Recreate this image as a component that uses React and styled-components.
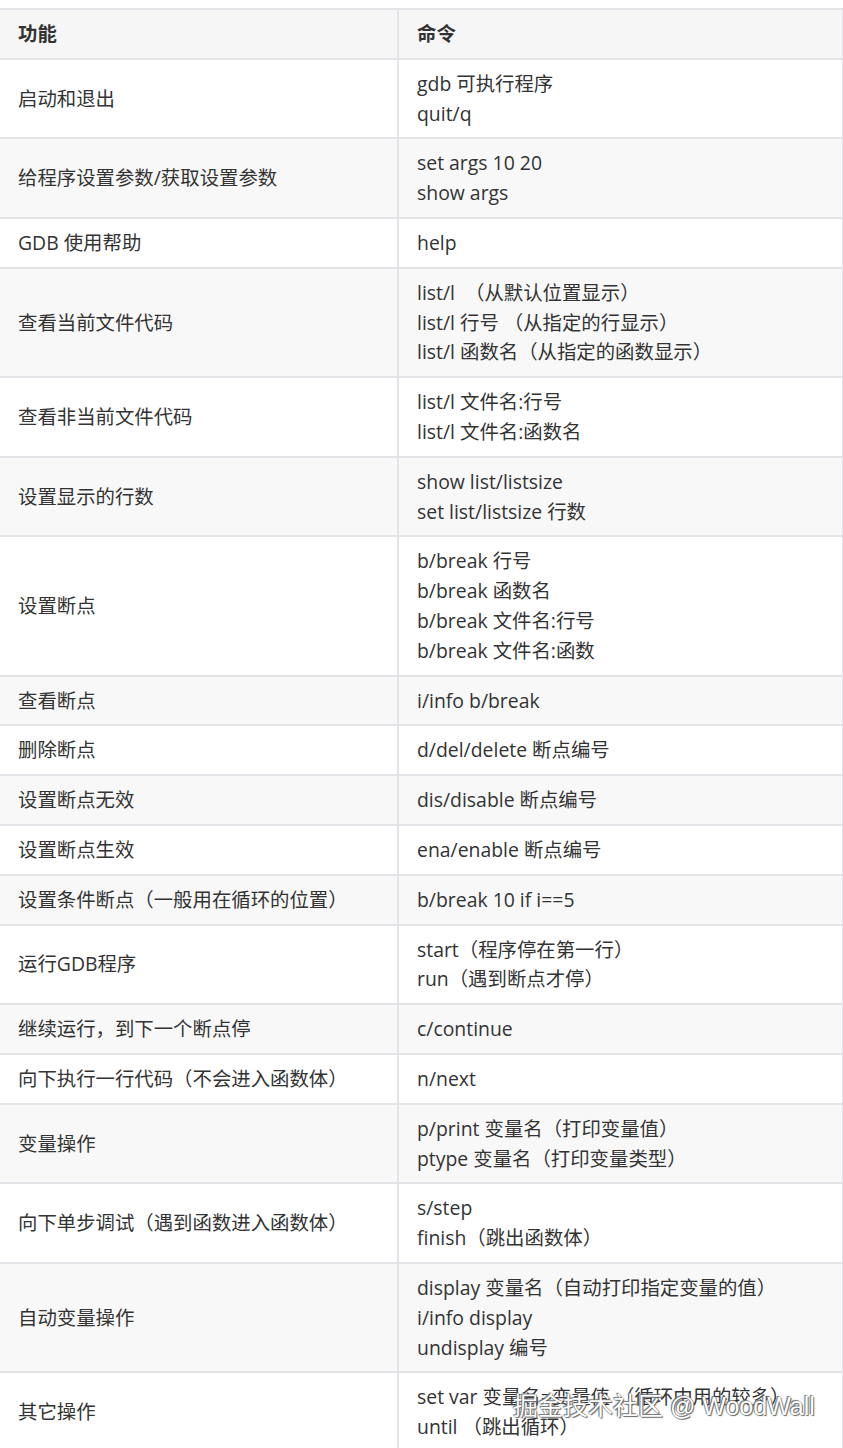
import React from 'react';
import styled, { createGlobalStyle } from 'styled-components';

const GlobalStyle = createGlobalStyle`
  html, body {
    margin: 0;
    padding: 0;
    background: #fff;
  }
  body {
    font-family: "Open Sans", "Noto Sans CJK SC", sans-serif;
    color: #333;
  }
`;

const Wrapper = styled.div`
  position: relative;
  width: 843px;
  height: 1448px;
  overflow: hidden;
  padding-top: 8px;
  box-sizing: border-box;
`;

const Table = styled.table`
  border-collapse: collapse;
  margin-left: -2px;
  width: 844px;
  table-layout: fixed;
  font-size: 19.4px;
  line-height: 29.8px;
`;

const HeadCell = styled.th`
  box-sizing: border-box;
  text-align: left;
  font-weight: 700;
  background: #f6f6f6;
  border: 2px solid #e2e4e7;
  padding: 9px 19px 9px 18px;
  width: ${p => p.w}px;
`;

const Row = styled.tr`
  background: ${p => (p.striped ? '#f8f8f8' : '#fff')};
`;

const Cell = styled.td`
  border: 2px solid #e2e4e7;
  padding: 9px 19px 9px 18px;
  vertical-align: middle;
  white-space: nowrap;
`;

const Line = styled.div`
  white-space: pre;
`;

const Watermark = styled.div`
  position: absolute;
  left: 513px;
  top: 1390px;
  font-size: 25px;
  line-height: 32px;
  white-space: nowrap;
  color: #fff;
  text-shadow: 0 0 1px #555, 1px 1px 1px #666, -1px -1px 1px #777;
  font-family: "Liberation Sans", "Noto Sans CJK SC", sans-serif;
  pointer-events: none;
`;

const rows = [
  ['启动和退出', ['gdb 可执行程序', 'quit/q']],
  ['给程序设置参数/获取设置参数', ['set args 10 20', 'show args']],
  ['GDB 使用帮助', ['help']],
  ['查看当前文件代码', ['list/l  （从默认位置显示）', 'list/l 行号 （从指定的行显示）', 'list/l 函数名（从指定的函数显示）']],
  ['查看非当前文件代码', ['list/l 文件名:行号', 'list/l 文件名:函数名']],
  ['设置显示的行数', ['show list/listsize', 'set list/listsize 行数']],
  ['设置断点', ['b/break 行号', 'b/break 函数名', 'b/break 文件名:行号', 'b/break 文件名:函数']],
  ['查看断点', ['i/info b/break']],
  ['删除断点', ['d/del/delete 断点编号']],
  ['设置断点无效', ['dis/disable 断点编号']],
  ['设置断点生效', ['ena/enable 断点编号']],
  ['设置条件断点（一般用在循环的位置）', ['b/break 10 if i==5']],
  ['运行GDB程序', ['start（程序停在第一行）', 'run（遇到断点才停）']],
  ['继续运行，到下一个断点停', ['c/continue']],
  ['向下执行一行代码（不会进入函数体）', ['n/next']],
  ['变量操作', ['p/print 变量名（打印变量值）', 'ptype 变量名（打印变量类型）']],
  ['向下单步调试（遇到函数进入函数体）', ['s/step', 'finish（跳出函数体）']],
  ['自动变量操作', ['display 变量名（自动打印指定变量的值）', 'i/info display', 'undisplay 编号']],
  ['其它操作', ['set var 变量名=变量值 （循环中用的较多）', 'until （跳出循环）']],
];

export default function App() {
  return (
    <>
      <GlobalStyle />
      <Wrapper>
        <Table>
          <thead>
            <tr>
              <HeadCell w={399}>功能</HeadCell>
              <HeadCell w={445}>命令</HeadCell>
            </tr>
          </thead>
          <tbody>
            {rows.map(([name, cmds], i) => (
              <Row key={name} striped={i % 2 === 1}>
                <Cell>{name}</Cell>
                <Cell>
                  {cmds.map(c => (
                    <Line key={c}>{c}</Line>
                  ))}
                </Cell>
              </Row>
            ))}
          </tbody>
        </Table>
        <Watermark>掘金技术社区 @ WoodWall</Watermark>
      </Wrapper>
    </>
  );
}
